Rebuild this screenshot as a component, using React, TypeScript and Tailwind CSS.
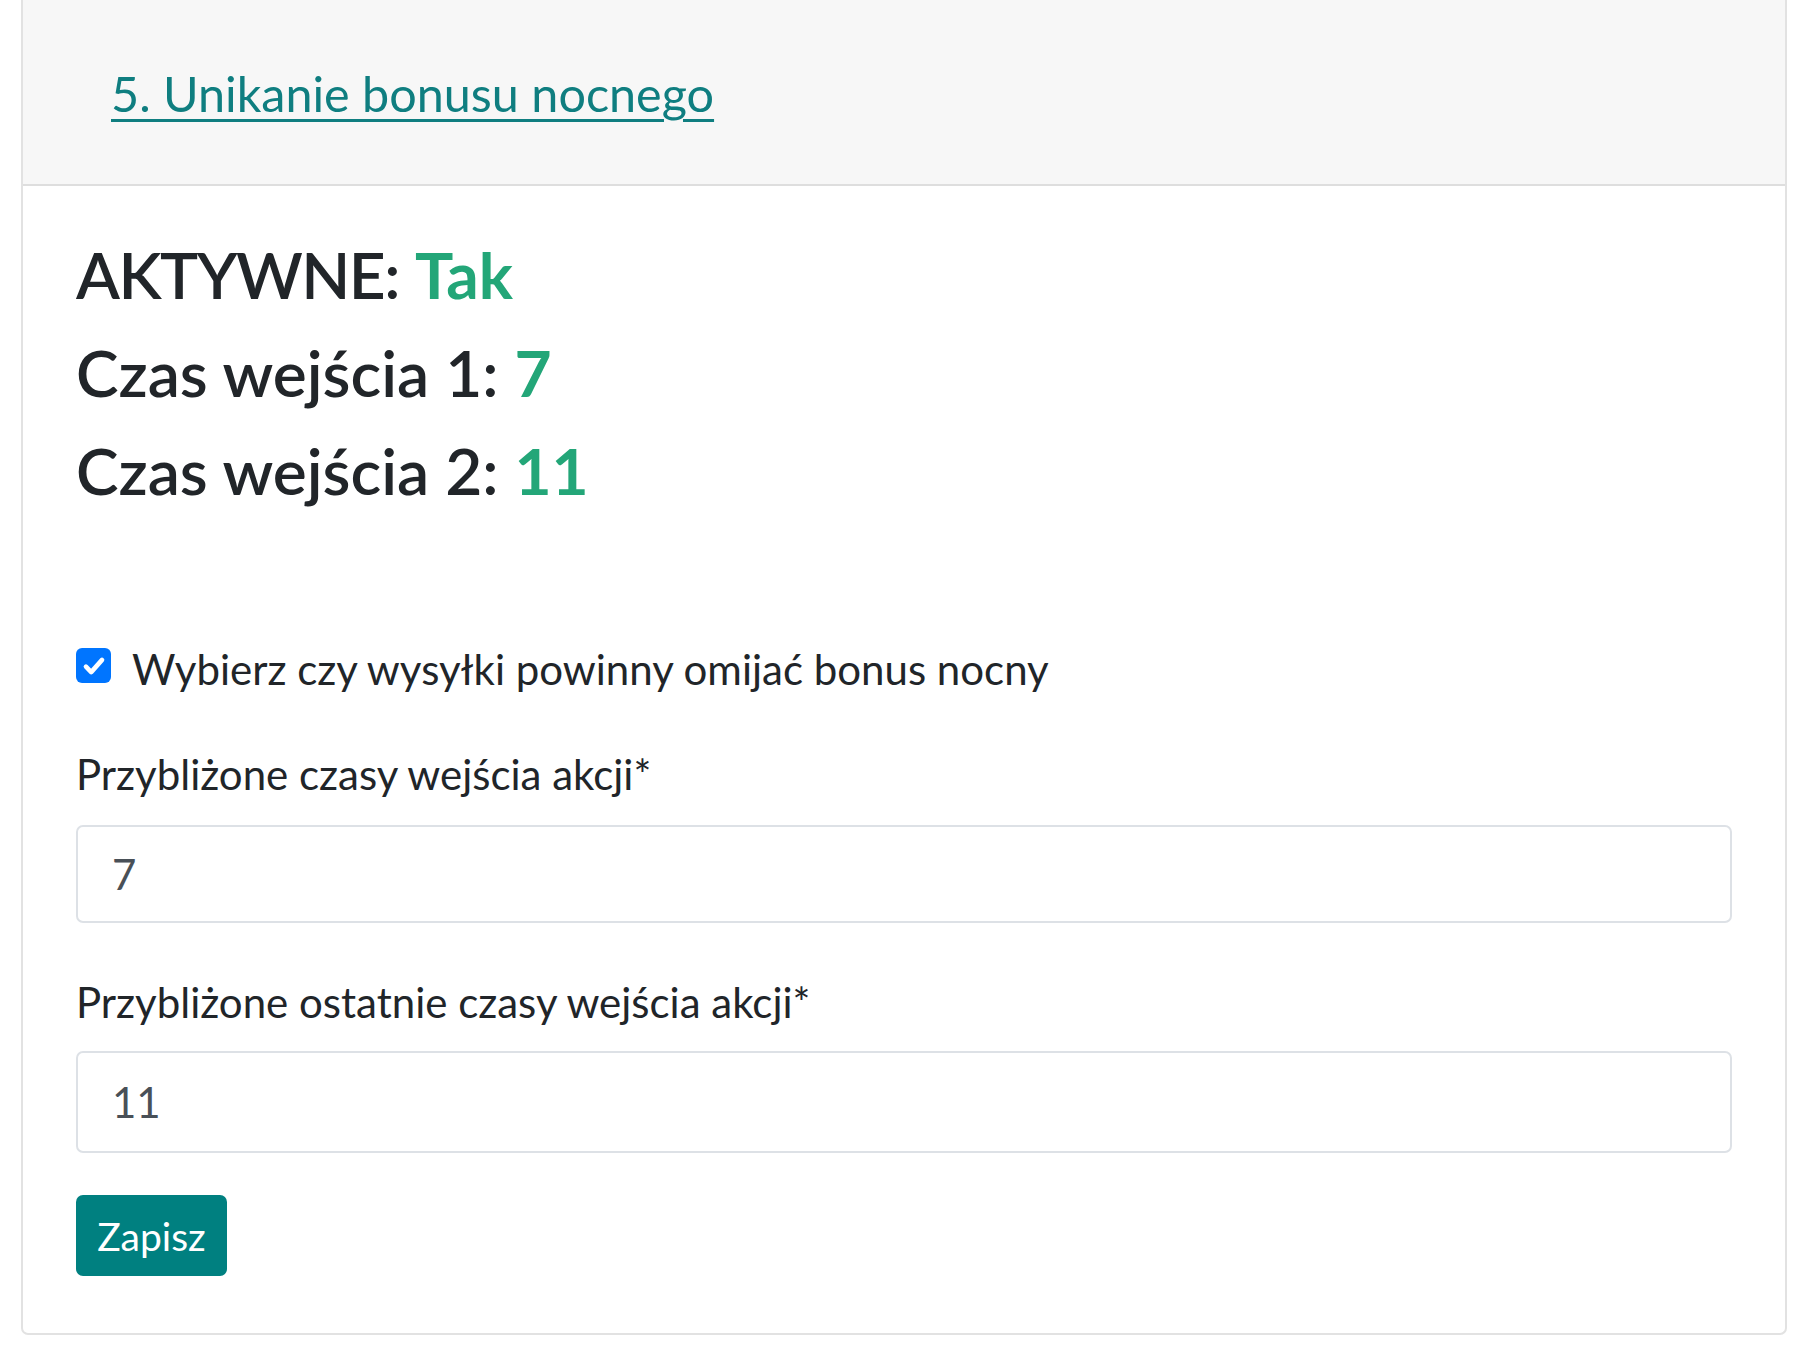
import React from 'react';

const font = { fontFamily: 'Lato, "Open Sans", sans-serif' };

function Checkbox() {
  return (
    <span className="mt-[4px] flex h-[35px] w-[35px] shrink-0 items-center justify-center rounded-[6px] bg-[#0075ff]">
      <svg viewBox="0 0 16 16" className="h-[28px] w-[28px]" fill="none">
        <path d="M3.4 8.4l3 3.1 6.2-7" stroke="white" strokeWidth="2.6" strokeLinecap="round" strokeLinejoin="round" />
      </svg>
    </span>
  );
}

export default function App() {
  return (
    <div className="min-h-screen bg-white pl-[21px] text-[#212529]" style={font}>
      <div className="w-[1766px] rounded-b-[7px] border-2 border-t-0 border-[#e2e2e2]">
        <div className="h-[186px] border-b-2 border-[#dedede] bg-[#f7f7f7] pl-[88px] pt-[70px]">
          <a
            href="#"
            className="text-[48.5px] leading-[47px] text-[#0f7e80] underline decoration-[3px] underline-offset-[7px]"
          >
            5. Unikanie bonusu nocnego
          </a>
        </div>

        <div className="px-[53px] pt-[40px] pb-[57px]">
          <h3 className="text-[64px] font-semibold leading-[98px]">
            <span className="tracking-[-1.5px]">AKTYWNE:</span> <strong className="font-bold text-[#23a678]">Tak</strong>
          </h3>
          <h3 className="text-[64px] font-semibold leading-[98px]">
            Czas wejścia 1: <strong className="font-bold text-[#23a678]">7</strong>
          </h3>
          <h3 className="text-[64px] font-semibold leading-[98px]">
            Czas wejścia 2: <strong className="font-bold text-[#23a678]">11</strong>
          </h3>

          <label className="mt-[124px] flex items-start gap-[21px] text-[42px] leading-[50px]">
            <Checkbox />
            <span>Wybierz czy wysyłki powinny omijać bonus nocny</span>
          </label>

          <div className="mt-[55px] text-[42px] leading-[50px]">Przybliżone czasy wejścia akcji*</div>
          <div className="mt-[26px] flex h-[98px] items-center rounded-[7px] border-2 border-[#dde1e6] pl-[34px] text-[42px] leading-[50px] text-[#495057]">
            7
          </div>

          <div className="mt-[54px] text-[42px] leading-[50px]">Przybliżone ostatnie czasy wejścia akcji*</div>
          <div className="mt-[24px] flex h-[102px] items-center rounded-[7px] border-2 border-[#dde1e6] pl-[34px] text-[42px] leading-[50px] text-[#495057]">
            11
          </div>

          <button className="mt-[42px] flex h-[81px] w-[151px] items-center justify-center rounded-[7px] bg-[#008080] text-[39px] leading-[50px] text-white">
            Zapisz
          </button>
        </div>
      </div>
    </div>
  );
}
